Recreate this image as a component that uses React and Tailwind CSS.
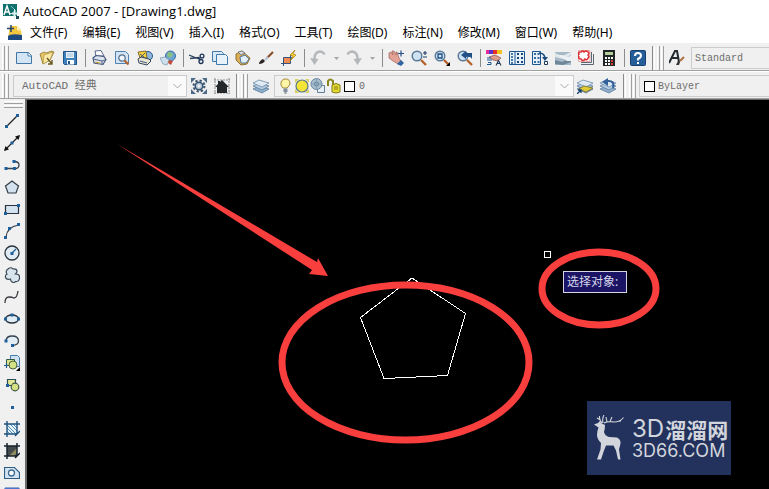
import { useState } from "react";

const menus = [
  "文件(F)",
  "编辑(E)",
  "视图(V)",
  "插入(I)",
  "格式(O)",
  "工具(T)",
  "绘图(D)",
  "标注(N)",
  "修改(M)",
  "窗口(W)",
  "帮助(H)",
];

const NAVY = "#1d3c66";

/* small blue grip square used by all the draw icons */
function Dot({ x, y }) {
  return <rect x={x - 1.5} y={y - 1.5} width="3" height="3" fill="#1f5f9c" />;
}

function Icon({ children }) {
  return (
    <svg viewBox="0 0 16 16" className="block size-4 shrink-0" fill="none" aria-hidden="true">
      {children}
    </svg>
  );
}

const lens = (
  <>
    <path d="M10 10l5 5" stroke="#b5622c" strokeWidth="2.4" />
    <circle cx="6" cy="6" r="4.8" fill="#cfe2f3" stroke="#5a7894" strokeWidth="1.4" />
  </>
);

const sheets = (
  <>
    <path d="M0 11l6-3 10 3-7 4z" fill="#8fb0cf" stroke="#5c7c9c" strokeWidth=".8" />
    <path d="M0 8l6-3 10 3-7 4z" fill="#b4cce1" stroke="#5c7c9c" strokeWidth=".8" />
    <path d="M0 5l6-3 10 3-7 4z" fill="#dfeaf3" stroke="#6e8cab" strokeWidth=".8" />
  </>
);

const standardTools = [
  [
    "新建",
    <>
      <path d="M.5 2.5h12l3 3v8H.5z" fill="#d3e5f4" stroke="#3f76a8" />
      <path d="M12 2.5v3.5h3.5" fill="#fff" stroke="#3f76a8" />
    </>,
  ],
  [
    "打开",
    <>
      <path d="M1 4l4-2 2 1 6-2 2 1-4 8-7 4z" fill="#e9c768" stroke="#8d7426" strokeWidth=".8" />
      <path d="M5 5l9-3-3 8-7 4z" fill="#fbe9a8" stroke="#a58935" strokeWidth=".6" />
      <path d="M8 8l5 6M13 10v4H9" stroke="#6b5a1d" strokeWidth="1.4" />
    </>,
  ],
  [
    "保存",
    <>
      <path d="M1.5 1.5h13v13h-12l-1-1z" fill="#3d80bd" stroke="#215384" />
      <path d="M4 2h8v6H4z" fill="#e6f0f8" />
      <path d="M5 10h7v4.5H5z" fill="#fff" />
      <path d="M6 11h2v3H6z" fill="#215384" />
      <path d="M5 4h6M5 6h6" stroke="#7fa7cb" strokeWidth=".7" />
    </>,
  ],
  null,
  [
    "打印",
    <>
      <path d="M5 6L4 1l6-.5L13 6z" fill="#fff" stroke="#475a7d" strokeWidth=".9" />
      <path d="M2 8l3-2.5 8 1 2 3-3 5-9-1.5z" fill="#dce3ee" stroke="#3f5277" strokeWidth="1.1" />
      <path d="M2 9l9 2 4-1.5M11 11v3" stroke="#3f5277" strokeWidth=".9" />
      <path d="M4 12l5 1.2" stroke="#d2a63c" strokeWidth="1.2" />
    </>,
  ],
  [
    "打印预览",
    <>
      <path d="M1.5 1.5h10l3 3v9h-13z" fill="#d3e5f4" stroke="#4f82b1" />
      <circle cx="8" cy="8" r="3.2" fill="#eef6fc" stroke="#536f8d" strokeWidth="1.2" />
      <path d="M10.5 10.5l4 4" stroke="#b5622c" strokeWidth="2.2" />
    </>,
  ],
  [
    "发布",
    <>
      <circle cx="11" cy="6" r="4.5" fill="#8fb7dc" stroke="#28568a" />
      <path d="M1 2l8-1 1 7H3z" fill="#f9d23f" stroke="#65501a" strokeWidth=".8" />
      <path d="M1 9l3-2 8 2 2 2-4 4-8-2z" fill="#e8e4d0" stroke="#34435c" />
      <path d="M3 4l4 3M8 3L4 7M3 11l7 2" stroke="#294c78" strokeWidth=".9" />
    </>,
  ],
  [
    "三维 DWF",
    <>
      <circle cx="10.5" cy="6" r="5" fill="#6fa2d4" stroke="#3b6d9d" />
      <path d="M8 2q4 0 5 3l-3 3-3-2z" fill="#8ac17c" />
      <path d="M0 8l5-1 4 3-2 5-4-1z" fill="#cfe0ec" stroke="#7f9fb9" strokeWidth=".8" />
      <path d="M9 10l4 1-2 4-3-2z" fill="#c34c3c" />
    </>,
  ],
  null,
  [
    "剪切",
    <>
      <path d="M0 5l10 4M1 8.5l9-1" stroke="#30445e" strokeWidth="1.3" />
      <circle cx="13" cy="6" r="1.9" stroke="#1d3357" strokeWidth="1.3" />
      <circle cx="12" cy="11.5" r="2" stroke="#1d3357" strokeWidth="1.3" />
      <path d="M9 8l3 2M9 8.5l2.5-1" stroke="#1d3357" strokeWidth="1.3" />
    </>,
  ],
  [
    "复制",
    <>
      <path d="M.5 1.5h9l2 2v8H.5z" fill="#d8e8f5" stroke="#4079ab" />
      <path d="M4.5 4.5h9l2 2v8h-11z" fill="#e8f2fa" stroke="#4079ab" />
    </>,
  ],
  [
    "粘贴",
    <>
      <path d="M1 4l6-3 8 7-3 6-6 1-5-5z" fill="#d9ae55" stroke="#85662a" strokeWidth=".9" />
      <path d="M3 2l4-1 3 2-4 2z" fill="#d6dbe2" stroke="#58626e" strokeWidth=".7" />
      <path d="M5 7l5-2 4 4-3 4H6z" fill="#e3eef8" stroke="#456f9b" strokeWidth=".9" />
    </>,
  ],
  [
    "特性匹配",
    <>
      <path d="M15 2L9 8" stroke="#8a4e27" strokeWidth="2.2" />
      <path d="M10 7l-3 3" stroke="#bcc6d2" strokeWidth="2.4" />
      <path d="M1 14q0-3 4-5l2 2q-2 3-6 3z" fill="#2b2623" />
    </>,
  ],
  [
    "块编辑器",
    <>
      <path d="M2.5 7.5h7v6h-7z" fill="#f08b53" stroke="#39547b" />
      <path d="M0 13.5h4M2.5 11v5M8 7.5h4M9.5 5v4" stroke="#32517b" />
      <path d="M14 0L9 5l3 1-3 5 6-6-3-1z" fill="#ffd52d" stroke="#a4771a" strokeWidth=".7" />
    </>,
  ],
  null,
  [
    "放弃",
    <>
      <path d="M14.5 4.5Q13 1.5 9.5 1.5 4 2.5 4.5 10" stroke="#b5b8bb" strokeWidth="2.4" />
      <path d="M0 8l4.5 7 4-6z" fill="#b5b8bb" />
    </>,
  ],
  "drop",
  [
    "重做",
    <>
      <path d="M1.5 4.5Q3 1.5 6.500 1.5 12 2.5 11.5 10" stroke="#b5b8bb" strokeWidth="2.4" />
      <path d="M16 8l-4.5 7-4-6z" fill="#b5b8bb" />
    </>,
  ],
  "drop",
  null,
  [
    "实时平移",
    <>
      <path d="M1 3l2-1 2 3-1-4h2l2 4V2h1l2 6 2 3-3 3-5-3-4-3z" fill="#e3a296" stroke="#9c6058" strokeWidth=".7" />
      <path d="M9 14l4-4 3 3-3 3z" fill="#2f66a2" />
      <path d="M13 .5v6M10 3.5h6" stroke="#27518a" strokeWidth="1.2" />
    </>,
  ],
  [
    "实时缩放",
    <>
      {lens}
      <path d="M12 3h4M14 1v4M12 7h4" stroke={NAVY} strokeWidth="1.1" />
    </>,
  ],
  [
    "窗口缩放",
    <>
      {lens}
      <path d="M4 4h4v4H4z" stroke="#184f89" strokeWidth="1.3" />
      <path d="M16 12v4h-4z" fill="#000" />
    </>,
  ],
  [
    "缩放上一个",
    <>
      {lens}
      <path d="M4 5l5-4v2h6v6q-1-3-6-2v2z" fill="#1f4f86" />
    </>,
  ],
  null,
  [
    "特性",
    <>
      <path d="M0 0h3v4H0z" fill="#e62c9a" />
      <path d="M3 0h4v4H3z" fill="#5b30d0" />
      <path d="M7 0h4v4H7z" fill="#e33126" />
      <path d="M11 0h5v4h-5z" fill="#f0c31f" />
      <path d="M3 7l6-2 6 3-3 3-5-1z" fill="#dc9b8b" stroke="#844d4a" strokeWidth=".7" />
      <path d="M1 8h4M1 10h5M2 12.5h3v2H1" stroke="#235992" />
      <path d="M10 15.5l2.500-5 2.500 5M11 13.5h3" stroke="#203759" strokeWidth="1.1" />
    </>,
  ],
  [
    "设计中心",
    <>
      <path d="M.5 1.5h15v13H.5z" fill="#e5f0f8" stroke="#1d568e" />
      <path d="M6 1.5v13" stroke="#1d568e" />
      <path d="M2 4h2M2 7h2M2 10h2M2 13h2" stroke="#1d568e" strokeWidth="1.3" />
      <path d="M8 3h2v2H8zM12 3h2v2h-2zM8 7h2v2H8zM12 7h2v2h-2zM8 11h2v2H8zM12 11h2v2h-2z" fill="#1b4779" />
    </>,
  ],
  [
    "工具选项板",
    <>
      <path d="M.5 1.5h8v13h-8z" fill="#e5f0f8" stroke="#1d568e" />
      <path d="M2 3h2v2H2zM2 7h2v2H2zM2 11h2v2H2zM5.5 3h2v2h-2zM5.5 7h2v2h-2zM5.5 11h2v2h-2z" fill="#386ca0" />
      <path d="M7 3q6 0 6 6" stroke="#1b4b7e" strokeWidth="1.5" />
      <path d="M10 7h6l-3 4z" fill="#1b4b7e" />
      <path d="M12.500 11.500h3v3h-3z" fill="#fff" stroke="#1b3b5e" />
    </>,
  ],
  [
    "图纸集管理器",
    <>
      <path d="M0 2h16v13H0z" fill="#a7b8c6" />
      <path d="M0 3l7 3 9-4v3L8 9 0 7z" fill="#dfe7eb" />
      <path d="M0 10l7 2 9-4v4l-8 3-8-1z" fill="#6f8799" />
      <path d="M3 5l9 6h4V6l-4 1-5-2z" fill="#ecf1f3" />
    </>,
  ],
  [
    "标记集管理器",
    <>
      <path d="M3 14.5h12.500V4M3 12.5h10.500V2" stroke="#5b6877" />
      <path d="M.5.5h11.500v11H.5z" fill="#fff" stroke="#e47777" strokeWidth=".6" />
      <path d="M3 2q2-2 3 0 2-2 4 0 2 1 0 3 2 2 0 3-1 3-3 1-2 3-4 0-3 0-2-2-2-2 0-3-1-2 1-2z" stroke="#d92f35" strokeWidth="1.5" />
    </>,
  ],
  [
    "快速计算器",
    <>
      <path d="M2 0h12v16H2z" fill="#202526" />
      <path d="M4 2h8v3H4z" fill="#b5cf9b" />
      <path d="M4 7h2v2H4zM10 7h2v2h-2zM7 7h2v2H7zM4 10h2v2H4zM7 10h2v2H7zM4 13h2v2H4zM7 13h2v2H7z" fill="#fff" />
      <path d="M10 10h2v2h-2zM10 13h2v2h-2z" fill="#d63a30" />
    </>,
  ],
  null,
  [
    "帮助",
    <>
      <rect x=".5" y=".5" width="15" height="15" rx="1" fill="#245f9a" stroke="#173f70" />
      <path d="M5 6q0-3 3-3t3 2.5q0 2-3 3.5v1.5" stroke="#fff" strokeWidth="2" />
      <path d="M7 12h2v2H7z" fill="#fff" />
    </>,
  ],
];

const gear = (
  <>
    <path d="M0 0h5L0 5zM11 0h5v5zM0 11v5h5zM16 11v5h-5z" fill="#4d6a88" />
    <circle cx="8" cy="8" r="5.5" stroke="#3c5571" strokeWidth="2" strokeDasharray="2.300 2" />
    <circle cx="8" cy="8" r="3.8" fill="#b6cadb" stroke="#37526e" strokeWidth="1.5" />
    <circle cx="8" cy="8" r="1.5" fill="#f0f0f0" />
  </>
);

const house = (
  <>
    <path d="M1 0v16M15 0v16M0 2h16M0 15h16" stroke="#8b8b8b" strokeDasharray="2 1" />
    <path d="M8 2l7 7h-2v6H3V9H1l3-3V3h2v1z" fill="#25282a" />
  </>
);

const drawTools = [
  [
    "直线",
    <>
      <path d="M2 14L14 2" stroke="#222" strokeWidth="1.2" />
      <Dot x={2.5} y={13.5} />
      <Dot x={13.5} y={2.5} />
    </>,
  ],
  [
    "构造线",
    <>
      <path d="M1 15L15 1" stroke="#222" strokeWidth="1.2" />
      <path d="M0 16l1.5-5L5 14.5zM16 0l-5 1.5L14.5 5z" fill="#111" />
      <Dot x={8} y={8} />
    </>,
  ],
  [
    "多段线",
    <>
      <path d="M2 11.5h9M10 4.5q5 0 5 3.5t-4 3.5" stroke="#35414d" strokeWidth="1.3" />
      <Dot x={2} y={11.5} />
      <Dot x={10.5} y={11.5} />
      <Dot x={10} y={4.5} />
    </>,
  ],
  ["正多边形", <path key="p" d="M8 2l6.500 5-2.500 7H4L1.5 7z" fill="#d3e2ee" stroke="#333d46" strokeWidth="1.2" />],
  [
    "矩形",
    <>
      <path d="M1.5 4.5h13v8h-13z" fill="#d3e2ee" stroke="#28333d" strokeWidth="1.2" />
      <Dot x={14.5} y={4.5} />
      <Dot x={1.5} y={12.5} />
    </>,
  ],
  [
    "圆弧",
    <>
      <path d="M2 14Q3 4 14.5 2" stroke="#35414d" strokeWidth="1.2" />
      <Dot x={1.5} y={14.5} />
      <Dot x={5.5} y={5.5} />
      <Dot x={14.5} y={1.5} />
    </>,
  ],
  [
    "圆",
    <>
      <circle cx="8" cy="8" r="7" fill="#e0ebf3" stroke="#28333d" strokeWidth="1.3" />
      <path d="M8 8l4-4" stroke="#1f5f9c" strokeWidth="1.2" />
      <Dot x={8} y={8.5} />
    </>,
  ],
  [
    "修订云线",
    <path
      key="c"
      d="M4 2q3-2.500 5 0 4-.5 4 2.500-.5 1.500-1.500 2.500 4.500 0 4 4-.5 4-4 3.500-1.500 2-4 0-1-1-1-2.500-4 1-5-1.500-.5-2.500 1.500-3.500Q1 4 4 2z"
      fill="#d9e5ee"
      stroke="#3a4855"
      strokeWidth="1.2"
    />,
  ],
  ["样条曲线", <path key="s" d="M1 14q0-6 4-6 3 0 5 1 3 0 4-7" stroke="#35393d" strokeWidth="1.3" />],
  [
    "椭圆",
    <>
      <ellipse cx="8" cy="8" rx="6.5" ry="4" fill="#e0ebf3" stroke="#28333d" strokeWidth="1.3" />
      <Dot x={8} y={4} />
      <Dot x={1.5} y={8} />
      <Dot x={14.5} y={8} />
    </>,
  ],
  [
    "椭圆弧",
    <>
      <path d="M2 7q1-4 6-4 6.500 0 6.500 5 0 4-6 4.500" fill="#e0ebf3" stroke="#35414d" strokeWidth="1.3" />
      <Dot x={2} y={8} />
      <Dot x={8.5} y={12.5} />
    </>,
  ],
  [
    "插入块",
    <>
      <path d="M6.5.5h7l2 2v9h-9z" fill="#cfe1f1" stroke="#447bae" />
      <path d="M2.5 4.5h8v6h-8z" fill="#dce48a" stroke="#335a40" />
      <circle cx="9" cy="10" r="4" fill="#d6e184" stroke="#466247" />
      <path d="M0 10.5h4M2.5 8v5" stroke="#205a91" strokeWidth="1.2" />
      <path d="M16 12v4h-4z" fill="#000" />
    </>,
  ],
  [
    "创建块",
    <>
      <path d="M3.5 2.5h8v6h-8z" fill="#e1e794" stroke="#294f52" strokeWidth="1.2" />
      <circle cx="11" cy="10" r="3.8" fill="#d6e184" stroke="#405a44" strokeWidth="1.2" />
      <Dot x={3.5} y={8.5} />
    </>,
  ],
  ["点", <Dot key="d" x={8.5} y={8.5} />],
  [
    "图案填充",
    <>
      <path d="M3 3h10v10H3z" fill="#e7f2f8" />
      <path d="M3 4l9 9M6 3l7 7M9 3l4 4M3 7l6 6M3 10l3 3" stroke="#4082af" strokeWidth=".9" />
      <path d="M3 0v16M13 0v13M0 3h16M0 13h13M11 15l5-5" stroke="#1e527e" strokeWidth="1.4" />
    </>,
  ],
  [
    "渐变色",
    <>
      <path d="M3 3h10v10H3z" fill="#44494d" />
      <path d="M6 12l7-7v5l-3 3H6z" fill="#8e8d5d" />
      <path d="M3 0v16M13 0v13M0 3h16M0 13h13M11 15l5-5" stroke="#16222d" strokeWidth="1.5" />
    </>,
  ],
  [
    "面域",
    <>
      <path d="M.5 2.5h10l5 5v6H.5z" fill="#d3e5f3" stroke="#315d83" strokeWidth="1.2" />
      <circle cx="7.5" cy="8" r="3" fill="#fff" stroke="#3f6b91" strokeWidth="1.3" />
    </>,
  ],
  [
    "表格",
    <>
      <path d="M1 1h14v14H1z" fill="#fff" stroke="#345cad" />
      <path d="M1 1h14v4H1z" fill="#4b74cf" />
    </>,
  ],
];

function ToolButton({ label, icon }) {
  return (
    <button type="button" title={label} aria-label={label} className="flex h-4 w-[23px] shrink-0 pl-[3px]">
      <Icon>{icon}</Icon>
    </button>
  );
}

/* double raised bar at the start of a toolbar */
function Grip() {
  return (
    <div className="flex shrink-0 gap-px self-stretch">
      <div className="w-[3px] border-r border-l border-r-[#a0a0a0] border-l-white" />
      <div className="w-[3px] border-r border-l border-r-[#a0a0a0] border-l-white" />
    </div>
  );
}

function Ridge() {
  return <div className="w-[3px] shrink-0 self-stretch border-r border-l border-r-white border-l-[#8c8c8c]" />;
}

function Chevron() {
  return (
    <div className="pointer-events-none flex w-[18px] shrink-0 items-center justify-center self-stretch bg-[#fafafa]">
      <svg viewBox="0 0 9 6" className="h-1.5 w-[9px]" fill="none" aria-hidden="true">
        <path d="M.5 1l4 4 4-4" stroke="#a8a8a8" />
      </svg>
    </div>
  );
}

const selectText =
  "h-5 min-w-0 flex-1 appearance-none bg-transparent text-[#6d6d6d] font-['Liberation_Mono','Noto_Sans_CJK_SC',monospace]";

function App() {

  const [workspace, setWorkspace] = useState("AutoCAD 经典");
  const [layer, setLayer] = useState("0");
  const [color, setColor] = useState("ByLayer");
  const [textStyle, setTextStyle] = useState("Standard");

  return (
    <div className="flex h-screen flex-col overflow-hidden bg-white text-black font-['Noto_Sans','Noto_Sans_CJK_SC',sans-serif]">

      {/* TITLE */}

      <header className="flex h-[22px] shrink-0 items-center gap-1 pl-[3px]">
        <svg viewBox="0 0 16 16" className="size-4" fill="none" aria-hidden="true">
          <path d="M0 1h14v12H0z" fill="#12706c" />
          <path d="M1 12L4 3l3 9M2 9h4" stroke="#fff" strokeWidth="1.4" />
          <path d="M8 3l5 5" stroke="#73c7c0" />
          <path d="M7 10.5h9M11.5 6v10M10 9h3v3h-3z" stroke="#d9f1ef" />
          <path d="M13 13h3v3h-3z" fill="#174a50" />
        </svg>
        <h1 className="text-[13px] leading-4 font-['Open_Sans',sans-serif]">AutoCAD 2007 - [Drawing1.dwg]</h1>
      </header>

      {/* MENU BAR */}

      <nav className="flex h-[21px] shrink-0 items-center gap-[15px] pl-[7px]">
        <svg viewBox="0 0 16 16" className="-mr-2 size-4 shrink-0" fill="none" aria-hidden="true">
          <path d="M3 1h7l4 4 1 9H1L2 7z" fill="#f3c63f" />
          <path d="M1 11q3-3 14-1v5H1z" fill="#1d4a80" />
          <path d="M10 1l4 5-4-1z" fill="#fff3c0" />
          <path d="M4 0v7M0 3.500h7" stroke="#24466e" strokeWidth="1.500" />
        </svg>
        {menus.map((menu) => (
          <button key={menu} type="button" className="shrink-0 text-xs leading-4 whitespace-nowrap">
            {menu}
          </button>
        ))}
      </nav>

      {/* STANDARD TOOLBAR */}

      <div className="flex h-7 shrink-0 items-center border-b border-[#a0a0a0] bg-[#f0f0f0] pt-[3px] pl-0.5">
        <Grip />
        <div className="flex items-center pl-1">
          {standardTools.map((tool, i) => {
            if (tool === null) {
              return (
                <div key={i} className="flex w-1.5 shrink-0 justify-center">
                  <div className="h-[18px] w-px bg-[#8c8c8c]" />
                </div>
              );
            }
            if (tool === "drop") {
              return (
                <button key={i} type="button" aria-label="更多" className="flex w-[13px] shrink-0 justify-center">
                  <svg viewBox="0 0 5 3" className="h-[3px] w-[5px]" aria-hidden="true">
                    <path d="M0 0h5L2.5 3z" fill="#a5a5a5" />
                  </svg>
                </button>
              );
            }
            return <ToolButton key={i} label={tool[0]} icon={tool[1]} />;
          })}
        </div>
        <div className="ml-0.5 flex min-w-0 flex-1 items-center gap-0.5 self-stretch">
          <Ridge />
          <Grip />
          <ToolButton
            label="文字样式"
            icon={
              <>
                <path d="M0 13L6 1h2l2 11M3 8h6" stroke="#23292e" strokeWidth="2" />
                <path d="M15 7l-4 4" stroke="#aa713b" strokeWidth="2" />
                <path d="M7 15l2-4 2 1-1 3z" fill="#333" />
              </>
            }
          />
          <div className="flex h-[22px] min-w-0 flex-1 items-center border border-r-0 border-[#cccccc] pl-[3px]">
            <select
              aria-label="文字样式"
              value={textStyle}
              onChange={(e) => setTextStyle(e.target.value)}
              className={`${selectText} text-[10px]`}
            >
              <option>Standard</option>
            </select>
          </div>
        </div>
      </div>

      {/* LAYER TOOLBAR */}

      <div className="flex h-[27px] shrink-0 items-center border-t border-t-white bg-[#f0f0f0] pt-0.5 pl-0.5">
        <Grip />
        <div className="ml-1 flex h-[22px] w-[174px] shrink-0 items-center border border-[#cccccc] pl-2">
          <select
            aria-label="工作空间"
            value={workspace}
            onChange={(e) => setWorkspace(e.target.value)}
            className={`${selectText} text-[11px]`}
          >
            <option>AutoCAD 经典</option>
          </select>
          <Chevron />
        </div>
        <div className="flex pl-px">
          <ToolButton label="工作空间设置" icon={gear} />
          <ToolButton label="我的工作空间" icon={house} />
        </div>
        <div className="ml-0.5 flex min-w-0 flex-1 items-center self-stretch">
          <Ridge />
          <div className="flex self-stretch px-0.5">
            <Grip />
          </div>
          <ToolButton label="图层特性管理器" icon={sheets} />
          <div className="ml-px flex h-[22px] w-[300px] shrink-0 items-center border border-[#cccccc] pl-[3px]">
            <div className="flex shrink-0">
              <Icon>
                <path d="M5 10Q2 7 3 4q2-4 5-3 4 0 4 5-1 2-3 4z" fill="#fdf6a6" stroke="#a28838" />
                <path d="M5.5 10.5h4V14h-4z" fill="#7f8e9e" />
                <path d="M6.5 15h2" stroke="#414c58" />
              </Icon>
              <Icon>
                <path d="M1 1h4L1 5zM11 1h4v4zM1 11v4h4zM15 11v4h-4z" fill="#d8cf63" />
                <circle cx="8" cy="8" r="6" fill="#f2e536" stroke="#5b7886" strokeWidth="1.2" />
              </Icon>
              <Icon>
                <path d="M7.5 7.5h7v7h-7z" fill="#e9eef3" stroke="#60809c" />
                <circle cx="6.5" cy="6" r="5.5" fill="#a7bccb" stroke="#6b89a1" />
                <circle cx="6.5" cy="6" r="2" stroke="#5d7d98" />
                <path d="M1 6h11M6.5 1v10" stroke="#829eb3" strokeWidth=".8" />
              </Icon>
              <Icon>
                <path d="M2 8V3q2-3 5 0v4" stroke="#8c861f" strokeWidth="2" />
                <path d="M6 7q4-3 8 0v7q-4 2-8 0z" fill="#e4db2e" stroke="#817b1f" />
                <path d="M8 9h4M8 11h4" stroke="#817b1f" />
              </Icon>
            </div>
            <div className="ml-0.5 size-[11px] shrink-0 border border-black bg-white" />
            <div className="ml-1 flex min-w-0 flex-1">
              <select
                aria-label="图层"
                value={layer}
                onChange={(e) => setLayer(e.target.value)}
                className={`${selectText} text-[10px]`}
              >
                <option>0</option>
              </select>
            </div>
            <Chevron />
          </div>
          <div className="flex shrink-0">
            <ToolButton
              label="将对象的图层置为当前"
              icon={
                <>
                  {sheets}
                  <path d="M2 11l5-3 9 2-7 4z" fill="#e0cc38" stroke="#776d25" strokeWidth=".8" />
                  <path d="M0 16l4-4M1 12h3v3" stroke="#153f72" strokeWidth="1.3" />
                </>
              }
            />
            <ToolButton
              label="上一个图层"
              icon={
                <>
                  {sheets}
                  <path d="M13 10q2-8-6-7" stroke="#33629a" strokeWidth="2" />
                  <path d="M8 0v8L2 4z" fill="#33629a" />
                </>
              }
            />
          </div>
          <div className="ml-[3px] flex min-w-0 flex-1 items-center gap-[3px] self-stretch">
            <Ridge />
            <Grip />
            <div className="flex h-[22px] min-w-0 flex-1 items-center border border-r-0 border-[#cccccc] pl-1">
              <div className="size-[11px] shrink-0 border border-black bg-white" />
              <div className="ml-[3px] flex min-w-0 flex-1">
                <select
                  aria-label="颜色"
                  value={color}
                  onChange={(e) => setColor(e.target.value)}
                  className={`${selectText} text-[10px]`}
                >
                  <option>ByLayer</option>
                </select>
              </div>
            </div>
          </div>
        </div>
      </div>

      <div className="flex min-h-0 flex-1 border-t border-[#a0a0a0]">

        {/* DRAW TOOLBAR */}

        <aside className="flex w-[25px] shrink-0 flex-col overflow-hidden bg-[#f0f0f0] pl-1">
          <div className="mt-0.5 mr-0.5 flex h-[9px] shrink-0 flex-col gap-px">
            <div className="h-[3px] border-t border-b border-t-white border-b-[#a0a0a0]" />
            <div className="h-[3px] border-t border-b border-t-white border-b-[#a0a0a0]" />
          </div>
          {drawTools.map(([label, icon]) => (
            <button
              key={label}
              type="button"
              title={label}
              aria-label={label}
              className="flex h-[22px] shrink-0 items-center"
            >
              <Icon>{icon}</Icon>
            </button>
          ))}
        </aside>

        {/* MODEL SPACE */}

        <main className="relative min-w-0 flex-1 overflow-hidden border-t border-l-2 border-[#696969] bg-black">
          <svg viewBox="27 100 742 389" className="absolute top-0 left-0 h-[389px] w-[742px]" fill="none" aria-hidden="true">
            <path
              d="M412 278L465.5 313.5 447.5 375.5 384 378.5 360.5 317.5z"
              stroke="#fff"
              shapeRendering="crispEdges"
            />
            <rect x="544.5" y="251.5" width="6" height="6" stroke="#fff" />
            <ellipse cx="405.5" cy="362.5" rx="123.5" ry="77.5" stroke="#f93e3e" strokeWidth="7" />
            <ellipse cx="599" cy="288.5" rx="57" ry="36.5" stroke="#f93e3e" strokeWidth="7" />
            <path d="M117 144L317 262l1-4 10 18-19-2 3-4z" fill="#f93e3e" />
          </svg>

          <div className="absolute top-[171px] left-[536px] border border-[#d4d4e6] bg-[#1b1464] pr-2 pl-[3px] text-xs leading-5 text-[#d6d6ea]">
            选择对象:
          </div>

          <div className="absolute right-[38px] bottom-3.5 flex h-[74px] w-36 items-center gap-1.5 bg-[#22325c] pl-[5px] text-[#d3d5dc]">
            <svg viewBox="0 0 34 46" className="h-[46px] w-[34px] shrink-0" aria-hidden="true">
              <path
                d="M2 9.500l4-1.500 2-2 1 2 4 2q0 4-1 7 1 4 5 5l8 .5q4 2 3.500 6l-1.500 6 1.500 10H26l-2-9-2.500-5-7.500 0-2 5-3 9H5l3.500-10L9 28q-4-4-4-8 0-4 1.500-7.500z"
                fill="currentColor"
              />
              <path
                d="M10 8Q7 5 7.500 1M8.500 5L5 3M11 8Q10 3 12 0M12 8q4-2 10-1 6 0 9.500-4.500M15 7l-1-5M18 6.500l2-4.500M25 6.500l4-.5"
                stroke="currentColor"
                strokeWidth="1.1"
                fill="none"
              />
            </svg>
            <div className="flex flex-col whitespace-nowrap">
              <div className="flex items-center gap-px leading-[26px]">
                <span className="text-2xl leading-[26px] font-['Inter',sans-serif]">3D</span>
                <span className="text-[21px] font-bold font-['Noto_Sans_CJK_SC',sans-serif]">溜溜网</span>
              </div>
              <span className="text-[18px] leading-[18px] font-['Inter',sans-serif]">3D66.COM</span>
            </div>
          </div>
        </main>
      </div>
    </div>
  );
}

export default App;
